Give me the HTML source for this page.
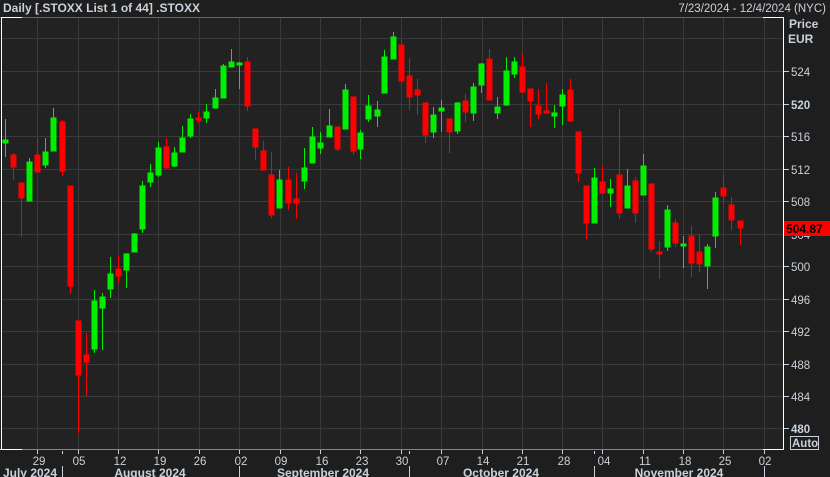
<!DOCTYPE html>
<html><head><meta charset="utf-8"><style>
html,body{margin:0;padding:0;background:#1e1e1e;width:830px;height:477px;overflow:hidden}
svg{display:block}
text{font-family:"Liberation Sans",sans-serif;fill:#c9d1da}
</style></head><body>
<svg width="830" height="477" viewBox="0 0 830 477" xmlns="http://www.w3.org/2000/svg">
<rect x="0" y="0" width="830" height="477" fill="#1e1e1e"/>
<rect x="1" y="17" width="782" height="432" fill="#222222"/>
<text x="3" y="12" font-size="12" font-weight="bold">Daily [.STOXX List 1 of 44] .STOXX</text>
<text x="826" y="12" font-size="11.5" text-anchor="end">7/23/2024 - 12/4/2024 (NYC)</text>
<g stroke="#3a3a3a" stroke-width="1">
<line x1="37.5" y1="17" x2="37.5" y2="449"/><line x1="78.5" y1="17" x2="78.5" y2="449"/><line x1="118.5" y1="17" x2="118.5" y2="449"/><line x1="158.5" y1="17" x2="158.5" y2="449"/><line x1="199.5" y1="17" x2="199.5" y2="449"/><line x1="239.5" y1="17" x2="239.5" y2="449"/><line x1="280.5" y1="17" x2="280.5" y2="449"/><line x1="320.5" y1="17" x2="320.5" y2="449"/><line x1="360.5" y1="17" x2="360.5" y2="449"/><line x1="401.5" y1="17" x2="401.5" y2="449"/><line x1="441.5" y1="17" x2="441.5" y2="449"/><line x1="482.5" y1="17" x2="482.5" y2="449"/><line x1="522.5" y1="17" x2="522.5" y2="449"/><line x1="562.5" y1="17" x2="562.5" y2="449"/><line x1="602.5" y1="17" x2="602.5" y2="449"/><line x1="643.5" y1="17" x2="643.5" y2="449"/><line x1="683.5" y1="17" x2="683.5" y2="449"/><line x1="723.5" y1="17" x2="723.5" y2="449"/><line x1="764.5" y1="17" x2="764.5" y2="449"/>
<line x1="1" y1="38.5" x2="783" y2="38.5"/><line x1="1" y1="71.5" x2="783" y2="71.5"/><line x1="1" y1="104.5" x2="783" y2="104.5"/><line x1="1" y1="136.5" x2="783" y2="136.5"/><line x1="1" y1="169.5" x2="783" y2="169.5"/><line x1="1" y1="201.5" x2="783" y2="201.5"/><line x1="1" y1="234.5" x2="783" y2="234.5"/><line x1="1" y1="266.5" x2="783" y2="266.5"/><line x1="1" y1="299.5" x2="783" y2="299.5"/><line x1="1" y1="331.5" x2="783" y2="331.5"/><line x1="1" y1="364.5" x2="783" y2="364.5"/><line x1="1" y1="396.5" x2="783" y2="396.5"/><line x1="1" y1="428.5" x2="783" y2="428.5"/>
</g>
<line x1="0" y1="17.5" x2="783" y2="17.5" stroke="#666" stroke-width="1"/>
<line x1="1" y1="17.5" x2="22" y2="17.5" stroke="#fff" stroke-width="1"/>
<line x1="1.5" y1="17" x2="1.5" y2="449" stroke="#fff" stroke-width="1"/>
<line x1="0" y1="449.5" x2="783" y2="449.5" stroke="#888" stroke-width="1"/>
<line x1="0" y1="449.5" x2="22" y2="449.5" stroke="#fff" stroke-width="1"/>
<line x1="763" y1="17.5" x2="783" y2="17.5" stroke="#fff" stroke-width="1"/>
<line x1="763" y1="449.5" x2="783" y2="449.5" stroke="#fff" stroke-width="1"/>
<line x1="783.5" y1="17" x2="783.5" y2="450" stroke="#fff" stroke-width="1"/>
<g stroke-width="1">
<g stroke="#00ee00" fill="#00ee00">
<line x1="5.5" y1="119" x2="5.5" y2="157"/><rect x="3" y="140" width="5" height="3"/>
<line x1="29.5" y1="158" x2="29.5" y2="201"/><rect x="27" y="162" width="5" height="39"/>
<line x1="45.5" y1="138" x2="45.5" y2="168"/><rect x="43" y="152" width="5" height="13"/>
<line x1="53.5" y1="108" x2="53.5" y2="151"/><rect x="51" y="118" width="5" height="33"/>
<line x1="94.5" y1="290" x2="94.5" y2="353"/><rect x="92" y="301" width="5" height="48"/>
<line x1="102.5" y1="293" x2="102.5" y2="350"/><rect x="100" y="297" width="5" height="11"/>
<line x1="110.5" y1="257" x2="110.5" y2="298"/><rect x="108" y="274" width="5" height="15"/>
<line x1="126.5" y1="253" x2="126.5" y2="288"/><rect x="124" y="254" width="5" height="16"/>
<line x1="134.5" y1="233" x2="134.5" y2="252"/><rect x="132" y="234" width="5" height="18"/>
<line x1="142.5" y1="181" x2="142.5" y2="233"/><rect x="140" y="186" width="5" height="43"/>
<line x1="150.5" y1="164" x2="150.5" y2="187"/><rect x="148" y="173" width="5" height="9"/>
<line x1="158.5" y1="142" x2="158.5" y2="177"/><rect x="156" y="148" width="5" height="27"/>
<line x1="174.5" y1="147" x2="174.5" y2="167"/><rect x="172" y="153" width="5" height="13"/>
<line x1="182.5" y1="126" x2="182.5" y2="152"/><rect x="180" y="138" width="5" height="14"/>
<line x1="190.5" y1="114" x2="190.5" y2="138"/><rect x="188" y="119" width="5" height="17"/>
<line x1="206.5" y1="104" x2="206.5" y2="123"/><rect x="204" y="112" width="5" height="6"/>
<line x1="215.5" y1="89" x2="215.5" y2="108"/><rect x="213" y="98" width="5" height="10"/>
<line x1="223.5" y1="64" x2="223.5" y2="98"/><rect x="221" y="66" width="5" height="32"/>
<line x1="231.5" y1="49" x2="231.5" y2="67"/><rect x="229" y="62" width="5" height="5"/>
<line x1="239.5" y1="62" x2="239.5" y2="89"/><rect x="237" y="63" width="5" height="2"/>
<line x1="279.5" y1="170" x2="279.5" y2="208"/><rect x="277" y="180" width="5" height="28"/>
<line x1="304.5" y1="148" x2="304.5" y2="189"/><rect x="302" y="168" width="5" height="13"/>
<line x1="312.5" y1="127" x2="312.5" y2="163"/><rect x="310" y="137" width="5" height="26"/>
<line x1="320.5" y1="132" x2="320.5" y2="154"/><rect x="318" y="143" width="5" height="5"/>
<line x1="329.5" y1="109" x2="329.5" y2="137"/><rect x="327" y="126" width="5" height="11"/>
<line x1="345.5" y1="84" x2="345.5" y2="129"/><rect x="343" y="90" width="5" height="39"/>
<line x1="360.5" y1="130" x2="360.5" y2="159"/><rect x="358" y="133" width="5" height="16"/>
<line x1="368.5" y1="95" x2="368.5" y2="122"/><rect x="366" y="106" width="5" height="13"/>
<line x1="377.5" y1="101" x2="377.5" y2="127"/><rect x="375" y="110" width="5" height="6"/>
<line x1="384.5" y1="50" x2="384.5" y2="93"/><rect x="382" y="57" width="5" height="36"/>
<line x1="393.5" y1="32" x2="393.5" y2="59"/><rect x="391" y="37" width="5" height="22"/>
<line x1="433.5" y1="107" x2="433.5" y2="138"/><rect x="431" y="115" width="5" height="17"/>
<line x1="441.5" y1="100" x2="441.5" y2="132"/><rect x="439" y="108" width="5" height="3"/>
<line x1="457.5" y1="102" x2="457.5" y2="134"/><rect x="455" y="103" width="5" height="28"/>
<line x1="473.5" y1="83" x2="473.5" y2="121"/><rect x="471" y="87" width="5" height="26"/>
<line x1="481.5" y1="63" x2="481.5" y2="93"/><rect x="479" y="64" width="5" height="21"/>
<line x1="497.5" y1="97" x2="497.5" y2="119"/><rect x="495" y="107" width="5" height="6"/>
<line x1="506.5" y1="57" x2="506.5" y2="106"/><rect x="504" y="71" width="5" height="34"/>
<line x1="514.5" y1="57" x2="514.5" y2="78"/><rect x="512" y="62" width="5" height="12"/>
<line x1="554.5" y1="105" x2="554.5" y2="128"/><rect x="552" y="113" width="5" height="3"/>
<line x1="562.5" y1="89" x2="562.5" y2="125"/><rect x="560" y="95" width="5" height="11"/>
<line x1="594.5" y1="168" x2="594.5" y2="223"/><rect x="592" y="178" width="5" height="45"/>
<line x1="610.5" y1="179" x2="610.5" y2="207"/><rect x="608" y="189" width="5" height="4"/>
<line x1="627.5" y1="169" x2="627.5" y2="208"/><rect x="625" y="186" width="5" height="22"/>
<line x1="643.5" y1="154" x2="643.5" y2="195"/><rect x="641" y="166" width="5" height="29"/>
<line x1="667.5" y1="205" x2="667.5" y2="251"/><rect x="665" y="210" width="5" height="37"/>
<line x1="683.5" y1="236" x2="683.5" y2="268"/><rect x="681" y="244" width="5" height="2"/>
<line x1="707.5" y1="244" x2="707.5" y2="289"/><rect x="705" y="247" width="5" height="19"/>
<line x1="715.5" y1="192" x2="715.5" y2="248"/><rect x="713" y="198" width="5" height="38"/>
</g>
<g stroke="#ff0000" fill="#ff0000">
<line x1="13.5" y1="153" x2="13.5" y2="180"/><rect x="11" y="155" width="5" height="12"/>
<line x1="21.5" y1="183" x2="21.5" y2="237"/><rect x="19" y="183" width="5" height="15"/>
<line x1="37.5" y1="138" x2="37.5" y2="172"/><rect x="35" y="155" width="5" height="17"/>
<line x1="62.5" y1="120" x2="62.5" y2="176"/><rect x="60" y="122" width="5" height="49"/>
<line x1="70.5" y1="186" x2="70.5" y2="294"/><rect x="68" y="186" width="5" height="100"/>
<line x1="78.5" y1="321" x2="78.5" y2="433"/><rect x="76" y="321" width="5" height="54"/>
<line x1="86.5" y1="333" x2="86.5" y2="396"/><rect x="84" y="355" width="5" height="7"/>
<line x1="118.5" y1="255" x2="118.5" y2="283"/><rect x="116" y="269" width="5" height="7"/>
<line x1="166.5" y1="138" x2="166.5" y2="168"/><rect x="164" y="147" width="5" height="21"/>
<line x1="198.5" y1="112" x2="198.5" y2="123"/><rect x="196" y="118" width="5" height="2"/>
<line x1="247.5" y1="57" x2="247.5" y2="111"/><rect x="245" y="62" width="5" height="44"/>
<line x1="255.5" y1="129" x2="255.5" y2="160"/><rect x="253" y="129" width="5" height="18"/>
<line x1="263.5" y1="141" x2="263.5" y2="170"/><rect x="261" y="151" width="5" height="19"/>
<line x1="271.5" y1="152" x2="271.5" y2="218"/><rect x="269" y="175" width="5" height="40"/>
<line x1="288.5" y1="167" x2="288.5" y2="210"/><rect x="286" y="180" width="5" height="23"/>
<line x1="296.5" y1="173" x2="296.5" y2="219"/><rect x="294" y="199" width="5" height="4"/>
<line x1="337.5" y1="127" x2="337.5" y2="151"/><rect x="335" y="127" width="5" height="22"/>
<line x1="353.5" y1="97" x2="353.5" y2="155"/><rect x="351" y="97" width="5" height="54"/>
<line x1="401.5" y1="40" x2="401.5" y2="84"/><rect x="399" y="45" width="5" height="36"/>
<line x1="409.5" y1="58" x2="409.5" y2="110"/><rect x="407" y="76" width="5" height="21"/>
<line x1="417.5" y1="79" x2="417.5" y2="115"/><rect x="415" y="90" width="5" height="5"/>
<line x1="425.5" y1="103" x2="425.5" y2="143"/><rect x="423" y="103" width="5" height="32"/>
<line x1="449.5" y1="119" x2="449.5" y2="153"/><rect x="447" y="119" width="5" height="13"/>
<line x1="465.5" y1="94" x2="465.5" y2="122"/><rect x="463" y="101" width="5" height="11"/>
<line x1="489.5" y1="49" x2="489.5" y2="100"/><rect x="487" y="59" width="5" height="41"/>
<line x1="522.5" y1="53" x2="522.5" y2="93"/><rect x="520" y="67" width="5" height="25"/>
<line x1="530.5" y1="89" x2="530.5" y2="127"/><rect x="528" y="89" width="5" height="12"/>
<line x1="538.5" y1="89" x2="538.5" y2="119"/><rect x="536" y="106" width="5" height="8"/>
<line x1="546.5" y1="83" x2="546.5" y2="113"/><rect x="544" y="111" width="5" height="2"/>
<line x1="570.5" y1="79" x2="570.5" y2="121"/><rect x="568" y="90" width="5" height="31"/>
<line x1="578.5" y1="132" x2="578.5" y2="182"/><rect x="576" y="132" width="5" height="41"/>
<line x1="586.5" y1="186" x2="586.5" y2="239"/><rect x="584" y="186" width="5" height="37"/>
<line x1="602.5" y1="166" x2="602.5" y2="193"/><rect x="600" y="182" width="5" height="11"/>
<line x1="619.5" y1="109" x2="619.5" y2="219"/><rect x="617" y="175" width="5" height="38"/>
<line x1="635.5" y1="177" x2="635.5" y2="223"/><rect x="633" y="181" width="5" height="32"/>
<line x1="651.5" y1="184" x2="651.5" y2="252"/><rect x="649" y="184" width="5" height="65"/>
<line x1="659.5" y1="241" x2="659.5" y2="279"/><rect x="657" y="252" width="5" height="2"/>
<line x1="675.5" y1="219" x2="675.5" y2="247"/><rect x="673" y="223" width="5" height="20"/>
<line x1="691.5" y1="226" x2="691.5" y2="277"/><rect x="689" y="236" width="5" height="27"/>
<line x1="699.5" y1="234" x2="699.5" y2="272"/><rect x="697" y="252" width="5" height="12"/>
<line x1="723.5" y1="175" x2="723.5" y2="205"/><rect x="721" y="188" width="5" height="8"/>
<line x1="731.5" y1="197" x2="731.5" y2="230"/><rect x="729" y="205" width="5" height="15"/>
<line x1="740.5" y1="221" x2="740.5" y2="245"/><rect x="738" y="221" width="5" height="7"/>
</g>
</g>
<text x="789" y="28" font-size="12" font-weight="bold">Price</text>
<text x="788" y="43" font-size="12" font-weight="bold">EUR</text>
<g stroke="#c9d1da" stroke-width="1">
<line x1="784" y1="71.5" x2="789" y2="71.5"/><line x1="784" y1="104.5" x2="789" y2="104.5"/><line x1="784" y1="136.5" x2="789" y2="136.5"/><line x1="784" y1="169.5" x2="789" y2="169.5"/><line x1="784" y1="201.5" x2="789" y2="201.5"/><line x1="784" y1="234.5" x2="789" y2="234.5"/><line x1="784" y1="266.5" x2="789" y2="266.5"/><line x1="784" y1="299.5" x2="789" y2="299.5"/><line x1="784" y1="331.5" x2="789" y2="331.5"/><line x1="784" y1="364.5" x2="789" y2="364.5"/><line x1="784" y1="396.5" x2="789" y2="396.5"/><line x1="784" y1="428.5" x2="789" y2="428.5"/>
</g>
<g font-size="11.5">
<text x="791" y="76">524</text><text x="791" y="109" font-weight="bold">520</text><text x="791" y="141">516</text><text x="791" y="174">512</text><text x="791" y="206">508</text><text x="791" y="239">504</text><text x="791" y="271">500</text><text x="791" y="304">496</text><text x="791" y="336">492</text><text x="791" y="369">488</text><text x="791" y="401">484</text><text x="791" y="433" font-weight="bold">480</text>
</g>
<rect x="784" y="221" width="46" height="15" fill="#ff0000"/>
<text x="786" y="233" font-size="12" font-weight="bold" style="fill:#000">504.87</text>
<rect x="790.5" y="436.5" width="28" height="13" fill="none" stroke="#c9d1da" stroke-width="1"/>
<text x="792" y="447" font-size="11.5" font-weight="bold">Auto</text>
<g stroke="#c9d1da" stroke-width="1">
<line x1="37.5" y1="450" x2="37.5" y2="454"/><line x1="78.5" y1="450" x2="78.5" y2="454"/><line x1="118.5" y1="450" x2="118.5" y2="454"/><line x1="158.5" y1="450" x2="158.5" y2="454"/><line x1="199.5" y1="450" x2="199.5" y2="454"/><line x1="239.5" y1="450" x2="239.5" y2="454"/><line x1="280.5" y1="450" x2="280.5" y2="454"/><line x1="320.5" y1="450" x2="320.5" y2="454"/><line x1="360.5" y1="450" x2="360.5" y2="454"/><line x1="401.5" y1="450" x2="401.5" y2="454"/><line x1="441.5" y1="450" x2="441.5" y2="454"/><line x1="482.5" y1="450" x2="482.5" y2="454"/><line x1="522.5" y1="450" x2="522.5" y2="454"/><line x1="562.5" y1="450" x2="562.5" y2="454"/><line x1="602.5" y1="450" x2="602.5" y2="454"/><line x1="643.5" y1="450" x2="643.5" y2="454"/><line x1="683.5" y1="450" x2="683.5" y2="454"/><line x1="723.5" y1="450" x2="723.5" y2="454"/><line x1="764.5" y1="450" x2="764.5" y2="454"/>
<line x1="62.5" y1="451" x2="62.5" y2="454"/><line x1="62.5" y1="466" x2="62.5" y2="477"/>
<line x1="239.5" y1="466" x2="239.5" y2="477"/>
<line x1="409.5" y1="451" x2="409.5" y2="454"/><line x1="409.5" y1="466" x2="409.5" y2="477"/>
<line x1="594.5" y1="451" x2="594.5" y2="454"/><line x1="594.5" y1="466" x2="594.5" y2="477"/>
<line x1="764.5" y1="466" x2="764.5" y2="477"/>
</g>
<g font-size="11.5" text-anchor="middle">
<text x="39" y="465">29</text><text x="79" y="465">05</text><text x="120" y="465">12</text><text x="160" y="465">19</text><text x="200" y="465">26</text><text x="241" y="465">02</text><text x="281" y="465">09</text><text x="322" y="465">16</text><text x="362" y="465">23</text><text x="402" y="465">30</text><text x="443" y="465">07</text><text x="483" y="465">14</text><text x="523" y="465">21</text><text x="564" y="465">28</text><text x="604" y="465">04</text><text x="645" y="465">11</text><text x="685" y="465">18</text><text x="725" y="465">25</text><text x="765" y="465">02</text>
</g>
<g font-size="12" font-weight="bold" text-anchor="middle">
<text x="30" y="477">July 2024</text><text x="150" y="477">August 2024</text><text x="323" y="477">September 2024</text><text x="501" y="477">October 2024</text><text x="679" y="477">November 2024</text>
</g>
</svg>
</body></html>
